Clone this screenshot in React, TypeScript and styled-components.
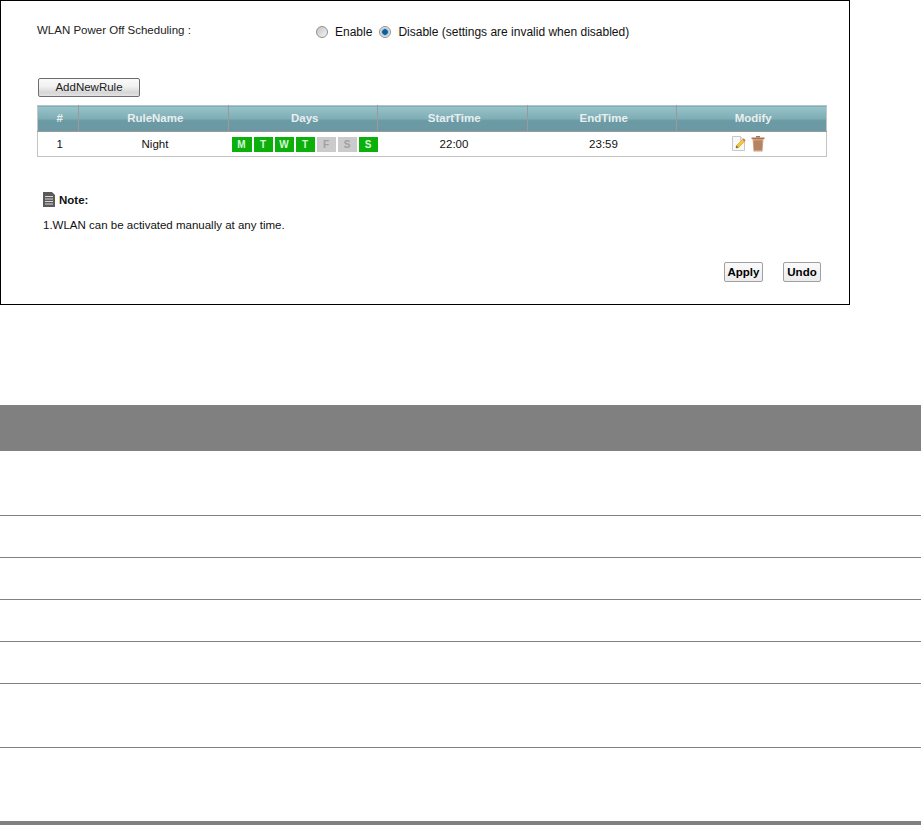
import React from 'react';
import styled, { createGlobalStyle } from 'styled-components';

const GlobalStyle = createGlobalStyle`
  html, body {
    margin: 0;
    padding: 0;
    background: #fff;
  }
  body {
    font-family: "Liberation Sans", Arial, sans-serif;
    font-size: 11px;
    color: #000;
  }
`;

const days = [
  { label: 'M', on: true },
  { label: 'T', on: true },
  { label: 'W', on: true },
  { label: 'T', on: true },
  { label: 'F', on: false },
  { label: 'S', on: false },
  { label: 'S', on: true },
];

const columns = [
  { title: '#', width: 41 },
  { title: 'RuleName', width: 150 },
  { title: 'Days', width: 149 },
  { title: 'StartTime', width: 150 },
  { title: 'EndTime', width: 149 },
  { title: 'Modify', width: 150 },
];

const docRowHeights = [65, 42, 42, 42, 42, 64, 73];

const EditIcon = () => (
  <svg width="15" height="17" viewBox="0 0 15 17">
    <path d="M0.5 1.5H8.5L12.5 5.5V15.5H0.5Z" fill="#f8f8f8" stroke="#c8c8c8" />
    <path d="M8.5 1.5V5.5H12.5" fill="#e6e6e6" stroke="#c8c8c8" />
    <path d="M4.5 10.5L10.5 4.5L12.5 6.5L6.5 12.5L4 13Z" fill="#f6c82e" stroke="#d19a20" strokeWidth="0.6" />
    <path d="M10.5 4.5L11.7 3.3L13.7 5.3L12.5 6.5Z" fill="#d9707a" />
    <path d="M4.5 10.5L4 13L6.5 12.5Z" fill="#6a5a48" />
  </svg>
);

const TrashIcon = () => (
  <svg width="14" height="17" viewBox="0 0 14 17">
    <path d="M0.5 2.5H13.5V4H0.5Z" fill="#a9744f" />
    <path d="M5 1H9V2.5H5Z" fill="#a9744f" />
    <path d="M1.5 4H12.5L11.5 16.5H2.5Z" fill="#cf9f7d" />
    <path d="M4 5.5V15M6 5.5V15M8 5.5V15M10 5.5V15" stroke="#9a6a48" strokeWidth="1" />
  </svg>
);

const NoteIcon = () => (
  <svg width="12" height="15" viewBox="0 0 12 15">
    <path d="M0 0H9L12 3V15H0Z" fill="#5a5a5a" />
    <path d="M2 4.5H10M2 7H10M2 9.5H10M2 12H10" stroke="#d8d8d8" strokeWidth="1" />
  </svg>
);

const App = () => {
  return (
    <>
      <GlobalStyle />
      <Panel>
        <SettingRow>
          <SettingLabel>WLAN Power Off Scheduling :</SettingLabel>
          <RadioGroup>
            <Radio />
            <RadioText>Enable</RadioText>
            <Radio checked />
            <RadioText>Disable (settings are invalid when disabled)</RadioText>
          </RadioGroup>
        </SettingRow>
        <AddButton>AddNewRule</AddButton>
        <RuleTable>
          <colgroup>
            {columns.map((c) => (
              <col key={c.title} width={c.width} />
            ))}
          </colgroup>
          <thead>
            <tr>
              {columns.map((c) => (
                <HeadCell key={c.title}>{c.title}</HeadCell>
              ))}
            </tr>
          </thead>
          <tbody>
            <tr>
              <BodyCell>1</BodyCell>
              <BodyCell>Night</BodyCell>
              <BodyCell>
                <DayList>
                  {days.map((d, i) => (
                    <DayBadge key={i} $on={d.on} $wide={i === 0}>
                      {d.label}
                    </DayBadge>
                  ))}
                </DayList>
              </BodyCell>
              <BodyCell>22:00</BodyCell>
              <BodyCell>23:59</BodyCell>
              <BodyCell>
                <ModifyIcons>
                  <EditIcon />
                  <TrashIcon />
                </ModifyIcons>
              </BodyCell>
            </tr>
          </tbody>
        </RuleTable>
        <NoteHead>
          <NoteIcon />
          <NoteTitle>Note:</NoteTitle>
        </NoteHead>
        <NoteText>1.WLAN can be activated manually at any time.</NoteText>
        <Actions>
          <ActionButton $width={39}>Apply</ActionButton>
          <ActionButton $width={38}>Undo</ActionButton>
        </Actions>
      </Panel>
      <DocTable>
        <DocHeader />
        {docRowHeights.map((h, i) => (
          <DocRow key={i} $height={h} />
        ))}
      </DocTable>
    </>
  );
};

const Panel = styled.div`
  box-sizing: border-box;
  width: 850px;
  height: 305px;
  border: 1px solid #000;
  padding: 21px 0 0 36px;
  display: flex;
  flex-direction: column;
  align-items: flex-start;
`;
const SettingRow = styled.div`
  display: flex;
  height: 19px;
`;
const SettingLabel = styled.div`
  width: 279px;
  font-size: 11.5px;
  line-height: 17px;
  color: #222;
`;
const RadioGroup = styled.div`
  display: flex;
  align-items: center;
  height: 20px;
`;
const Radio = styled.span<{ checked?: boolean }>`
  box-sizing: border-box;
  width: 12px;
  height: 12px;
  border-radius: 50%;
  border: 1px solid #8f8f8f;
  margin-right: 7px;
  background: ${(p) =>
    p.checked
      ? 'radial-gradient(circle, #0a5f9e 0 2.5px, #7fb4d6 3px, #d8d8d8 4px, #eeeeee 6px)'
      : 'linear-gradient(135deg, #c4c4c4, #f4f4f4)'};
`;
const RadioText = styled.span`
  font-size: 12px;
  margin-right: 7px;
  color: #111;
`;
const AddButton = styled.button`
  box-sizing: border-box;
  width: 102px;
  height: 19px;
  margin: 37px 0 0 1px;
  padding: 0 0 2px;
  border: 1px solid #6e6e6e;
  border-radius: 2px;
  background: linear-gradient(#fafafa, #f0f0f0 45%, #d6d6d6 80%, #e4e4e4);
  font-family: inherit;
  font-size: 11.5px;
  color: #222;
`;
const RuleTable = styled.table`
  width: 789px;
  margin-top: 8px;
  border-collapse: collapse;
  table-layout: fixed;
  border: 1px solid #c4c4c4;
`;
const HeadCell = styled.th`
  box-sizing: border-box;
  height: 26px;
  padding: 0 0 1px 3.5px;
  border-top: 1px solid #b4c4c8;
  border-bottom: 1px solid #9a9a9a;
  border-left: 1px solid #9a9a9a;
  border-right: 1px solid #9a9a9a;
  background: linear-gradient(#98c3ca, #7fadb5 50%, #6b99a4 55%, #6a98a3);
  color: #e8eef0;
  font-size: 11.5px;
  font-weight: bold;
  text-align: center;
  &:first-child {
    border-left: none;
  }
  &:last-child {
    border-right: none;
  }
`;
const BodyCell = styled.td`
  box-sizing: border-box;
  height: 25px;
  padding: 0 0 0 3px;
  font-size: 11.5px;
  color: #111;
  text-align: center;
`;
const DayList = styled.div`
  display: flex;
  gap: 2px;
`;
const DayBadge = styled.span<{ $on: boolean; $wide: boolean }>`
  width: ${(p) => (p.$wide ? 20 : 19)}px;
  height: 15px;
  line-height: 15px;
  font-size: 10px;
  font-weight: bold;
  text-align: center;
  background: ${(p) => (p.$on ? '#0bb00b' : '#cbcbcb')};
  color: ${(p) => (p.$on ? '#d8f5d8' : '#a0a0a0')};
`;
const ModifyIcons = styled.div`
  display: flex;
  justify-content: center;
  gap: 4px;
  height: 15px;
  margin-right: 9px;
  margin-top: -3px;
`;
const NoteHead = styled.div`
  display: flex;
  align-items: center;
  gap: 4px;
  margin: 35px 0 0 6px;
`;
const NoteTitle = styled.span`
  font-size: 11.5px;
  font-weight: bold;
  color: #111;
`;
const NoteText = styled.div`
  margin: 11px 0 0 6px;
  font-size: 11.5px;
  line-height: 14px;
  color: #111;
`;
const Actions = styled.div`
  display: flex;
  gap: 20px;
  margin: 30px 0 0 687px;
`;
const ActionButton = styled.button<{ $width: number }>`
  box-sizing: border-box;
  width: ${(p) => p.$width}px;
  height: 20px;
  padding: 0;
  border: 1px solid #a0a0a0;
  border-radius: 2px;
  background: linear-gradient(#fafafa, #ececec);
  font-family: inherit;
  font-size: 11.5px;
  font-weight: bold;
  color: #000;
`;
const DocTable = styled.div`
  margin-top: 100px;
  border-bottom: 4px solid #808080;
`;
const DocHeader = styled.div`
  height: 46px;
  background: #808080;
`;
const DocRow = styled.div<{ $height: number }>`
  box-sizing: border-box;
  height: ${(p) => p.$height}px;
  border-bottom: 1px solid #808080;
  &:last-child {
    border-bottom: none;
  }
`;

export default App;
